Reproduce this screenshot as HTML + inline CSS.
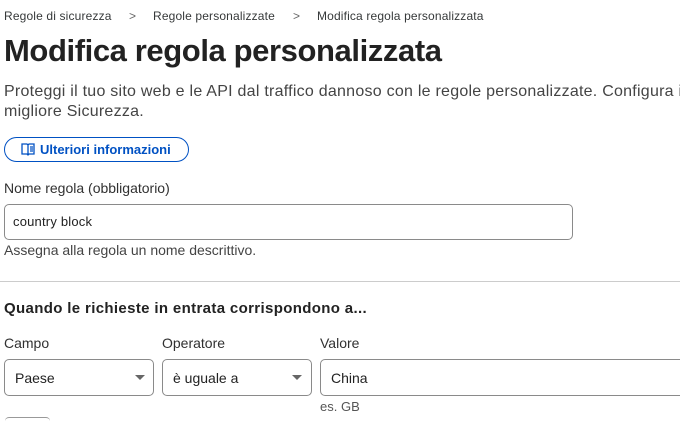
<!DOCTYPE html><html><head><style>
body{margin:0;width:680px;height:419px;overflow:hidden;background:#fff;font-family:"Liberation Sans",sans-serif;color:#313131;position:relative}
div,span{position:absolute;white-space:nowrap}
.bc{top:9px;font-size:12px;color:#36393a;letter-spacing:0.15px}
.box{border:1px solid #8a8a8a;border-radius:5px;box-sizing:border-box;background:#fff}
.tri{width:0;height:0;border-left:5px solid transparent;border-right:5px solid transparent;border-top:5px solid #666}
</style></head><body>
<div class="bc" style="left:4px">Regole di sicurezza</div>
<div class="bc" style="left:129px;color:#666">&gt;</div>
<div class="bc" style="left:153px">Regole personalizzate</div>
<div class="bc" style="left:293px;color:#666">&gt;</div>
<div class="bc" style="left:317px">Modifica regola personalizzata</div>
<div style="left:4px;top:33px;font-size:31px;letter-spacing:-0.4px;font-weight:bold;color:#222">Modifica regola personalizzata</div>
<div style="left:4px;top:82px;font-size:16px;letter-spacing:0.25px;line-height:20px;color:#444">Proteggi il tuo sito web e le API dal traffico dannoso con le regole personalizzate. Configura i<br>migliore Sicurezza.</div>
<div style="left:4px;top:137px;width:185px;height:25px;border:1px solid #0051c3;border-radius:13px;box-sizing:border-box"></div>
<svg style="position:absolute;left:21px;top:143px" width="14" height="13" viewBox="0 0 14 13"><path d="M1 1h5l1 1 1-1h5v10H8l-1 1-1-1H1z M7 2v9 M9 4h3 M9 6h3 M9 8h3" fill="none" stroke="#0051c3" stroke-width="1.3"/></svg>
<div style="left:40px;top:142px;font-size:13px;font-weight:bold;color:#0051c3">Ulteriori informazioni</div>
<div style="left:4px;top:180px;font-size:14px">Nome regola (obbligatorio)</div>
<div class="box" style="left:4px;top:204px;width:569px;height:36px"></div>
<div style="left:13px;top:214px;font-size:13px;letter-spacing:0.2px;color:#222">country block</div>
<div style="left:4px;top:242px;font-size:14px;color:#444">Assegna alla regola un nome descrittivo.</div>
<div style="left:0;top:281px;width:680px;height:1px;background:#ccc"></div>
<div style="left:4px;top:300px;font-size:15px;letter-spacing:0.35px;font-weight:bold;color:#222">Quando le richieste in entrata corrispondono a...</div>
<div style="left:4px;top:335px;font-size:14px">Campo</div>
<div style="left:162px;top:335px;font-size:14px">Operatore</div>
<div style="left:320px;top:335px;font-size:14px">Valore</div>
<div class="box" style="left:4px;top:359px;width:150px;height:37px"></div>
<div style="left:15px;top:370px;font-size:14px;color:#222">Paese</div>
<div class="tri" style="left:135px;top:375px"></div>
<div class="box" style="left:162px;top:359px;width:150px;height:37px"></div>
<div style="left:173px;top:370px;font-size:14px;color:#222">è uguale a</div>
<div class="tri" style="left:292px;top:375px"></div>
<div class="box" style="left:320px;top:359px;width:380px;height:37px"></div>
<div style="left:331px;top:370px;font-size:14px;color:#222">China</div>
<div style="left:320px;top:399px;font-size:13px;color:#555">es. GB</div>
<div style="left:5px;top:417px;width:45px;height:4px;border-top:1px solid #999;border-radius:4px 4px 0 0"></div>
</body></html>
